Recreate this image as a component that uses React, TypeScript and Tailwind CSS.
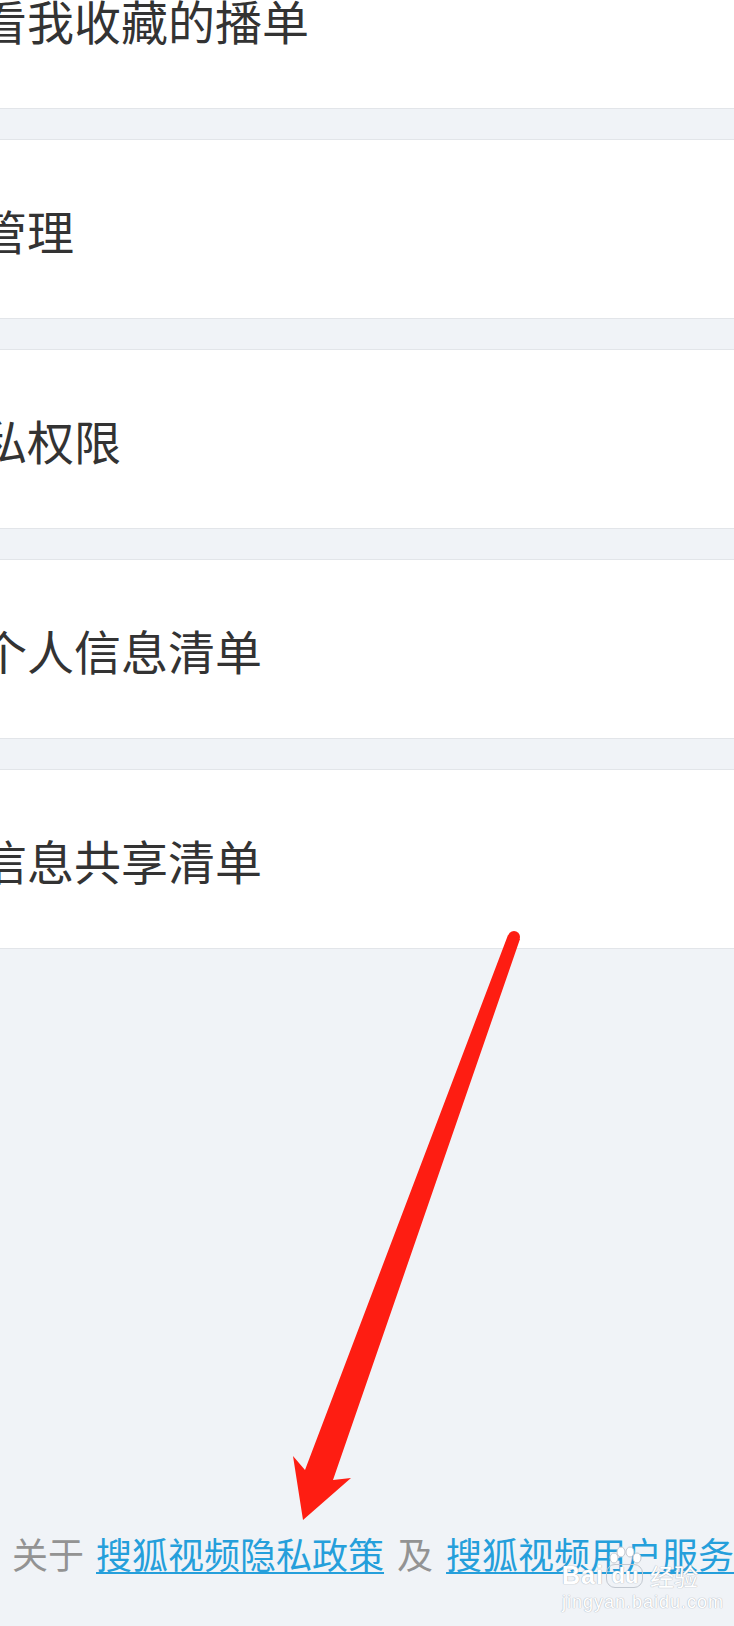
import React from 'react';

const rows = ['看我收藏的播单', '管理', '私权限', '个人信息清单', '信息共享清单'];

function Arrow() {
  return (
    <svg className="absolute left-0 top-0 w-[734px] h-[1626px] pointer-events-none" viewBox="0 0 734 1626">
      <circle cx="514" cy="937" r="6" fill="#fe1d12" />
      <polygon points="508,935 305,1470 293,1456 303,1520 351,1478 333,1480 520,939" fill="#fe1d12" />
    </svg>
  );
}

function Watermark() {
  return (
    <div className="absolute left-[562px] top-[1546px] flex flex-col items-start text-white [text-shadow:0_0_1px_#aeb5bf,0_0_1px_#aeb5bf] pointer-events-none">
      <div className="flex items-end leading-none font-['Liberation_Sans',sans-serif] font-bold">
        <span className="text-[25px] tracking-[1px]">Bai</span>
        <span className="relative flex flex-col items-center ml-[2px]">
          <svg width="38" height="20" viewBox="0 0 38 20" className="mb-[-2px]">
            <g fill="#ffffff" stroke="#c2c8d0" strokeWidth="1">
              <ellipse cx="8" cy="12" rx="4" ry="5" />
              <ellipse cx="15" cy="6" rx="4" ry="5" />
              <ellipse cx="24" cy="6" rx="4" ry="5" />
              <ellipse cx="31" cy="12" rx="4" ry="5" />
            </g>
          </svg>
          <span className="text-[22px] px-[4px] rounded-[9px] border border-[#c2c8d0]">du</span>
        </span>
        <span className="text-[24px] ml-[6px] font-['Noto_Sans_CJK_SC',sans-serif] font-normal">经验</span>
      </div>
      <div className="mt-[5px] text-[18px] leading-none tracking-[1px] font-['Liberation_Sans',sans-serif]">jingyan.baidu.com</div>
    </div>
  );
}

export default function App() {
  return (
    <div className="relative w-[734px] h-[1626px] overflow-hidden bg-[#f0f3f7] flex flex-col font-['Noto_Sans_CJK_SC','Noto_Sans',sans-serif]">
      <div className="-mt-[71px] flex flex-col gap-[30px]">
        {rows.map((label, i) => (
          <div key={i} className="h-[180px] bg-white border-y border-[#e2e5e9] flex items-center overflow-hidden">
            <span className="-ml-[20px] whitespace-nowrap text-[47px] leading-none text-[#333333]">{label}</span>
          </div>
        ))}
      </div>
      <div className="flex-1" />
      <div className="pl-[12px] pb-[53px] whitespace-nowrap text-[36px] leading-[40px] text-[#939393]">
        <span>关于</span>
        <a className="ml-[12px] text-[#259fdb] underline decoration-[2px] underline-offset-[3px]">搜狐视频隐私政策</a>
        <span className="ml-[13px]">及</span>
        <a className="ml-[13px] text-[#259fdb] underline decoration-[2px] underline-offset-[3px]">搜狐视频用户服务协议</a>
      </div>
      <Arrow />
      <Watermark />
    </div>
  );
}
